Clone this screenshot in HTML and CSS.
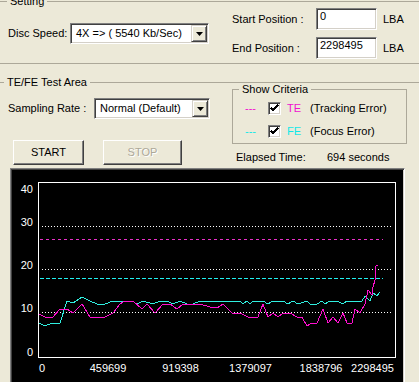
FILE: index.html
```html
<!DOCTYPE html>
<html lang="en">
<head>
    <meta charset="UTF-8">
    <title>TE/FE Test</title>
    <link rel="stylesheet" href="styles.css">
</head>
<body>
    <!-- Setting -->
    <fieldset class="group setting">
        <legend>Setting</legend>
        <div class="setting_body">
            <div class="speed_row">
                <label>Disc Speed:</label>
                <div class="combo speed_combo">
                    <span class="value">4X =&gt; ( 5540 Kb/Sec)</span>
                    <span class="drop"><svg width="7" height="4" viewBox="0 0 7 4"><polygon points="0,0 7,0 3.5,4" fill="#000"/></svg></span>
                </div>
            </div>
            <div class="pos_rows">
                <div class="pos_row">
                    <label>Start Position :</label>
                    <div class="field">0</div>
                    <span class="lba">LBA</span>
                </div>
                <div class="pos_row">
                    <label>End Position :</label>
                    <div class="field">2298495</div>
                    <span class="lba">LBA</span>
                </div>
            </div>
        </div>
    </fieldset>

    <!-- TE/FE Test Area -->
    <fieldset class="group test">
        <legend>TE/FE Test Area</legend>
        <div class="test_body">
            <div class="test_left">
                <div class="rate_row">
                    <label>Sampling Rate :</label>
                    <div class="combo rate_combo">
                        <span class="value">Normal (Default)</span>
                        <span class="drop"><svg width="7" height="4" viewBox="0 0 7 4"><polygon points="0,0 7,0 3.5,4" fill="#000"/></svg></span>
                    </div>
                </div>
                <div class="buttons">
                    <div class="btn start_btn">START</div>
                    <div class="btn stop_btn">STOP</div>
                </div>
            </div>
            <div class="test_right">
                <fieldset class="criteria">
                    <legend>Show Criteria</legend>
                    <div class="crit_body">
                        <div class="crit_row">
                            <span class="dash te">---</span>
                            <span class="check"><svg width="9" height="9" viewBox="0 0 9 9"><path d="M1 4 L3 6 L8 1" stroke="#000" stroke-width="2" fill="none" shape-rendering="crispEdges"/></svg></span>
                            <span class="crit_name te">TE</span>
                            <span>(Tracking Error)</span>
                        </div>
                        <div class="crit_row">
                            <span class="dash fe">---</span>
                            <span class="check"><svg width="9" height="9" viewBox="0 0 9 9"><path d="M1 4 L3 6 L8 1" stroke="#000" stroke-width="2" fill="none" shape-rendering="crispEdges"/></svg></span>
                            <span class="crit_name fe">FE</span>
                            <span>(Focus Error)</span>
                        </div>
                    </div>
                </fieldset>
                <div class="elapsed">
                    <span class="elapsed_label">Elapsed Time:</span>
                    <span>694 seconds</span>
                </div>
            </div>
        </div>

        <!-- 图表 -->
        <div class="chart">
            <svg width="391" height="226" viewBox="12 170 391 226" class="chart_svg">
                <g class="labels">
                    <text x="33" y="193" text-anchor="end">40</text>
                    <text x="33" y="226" text-anchor="end">30</text>
                    <text x="33" y="269" text-anchor="end">20</text>
                    <text x="33" y="312" text-anchor="end">10</text>
                    <text x="33" y="356" text-anchor="end">0</text>
                    <text x="39" y="372">0</text>
                    <text x="108" y="372" text-anchor="middle">459699</text>
                    <text x="180.5" y="372" text-anchor="middle">919398</text>
                    <text x="250.5" y="372" text-anchor="middle">1379097</text>
                    <text x="321" y="372" text-anchor="middle">1838796</text>
                    <text x="372.5" y="372" text-anchor="middle">2298495</text>
                </g>
                <rect x="38.5" y="182.5" width="357" height="175" fill="none" stroke="#fff" shape-rendering="crispEdges"/>
                <g shape-rendering="crispEdges">
                    <line x1="42" y1="226.5" x2="393" y2="226.5" stroke="#fff" stroke-dasharray="1 2"/>
                    <line x1="42" y1="269.5" x2="393" y2="269.5" stroke="#fff" stroke-dasharray="1 2"/>
                    <line x1="42" y1="312.5" x2="393" y2="312.5" stroke="#fff" stroke-dasharray="1 2"/>
                    <line x1="40" y1="239.5" x2="383" y2="239.5" stroke="#e830c8" stroke-dasharray="3 3"/>
                    <line x1="40" y1="278.5" x2="383" y2="278.5" stroke="#20f0f0" stroke-dasharray="4 2"/>
                </g>
                <polyline fill="none" stroke="#30f0e0" shape-rendering="crispEdges" points="39,323 45,326 52,323 60,323 67,301 73,303 82,297 90,301 97,304 105,304 113,301 123,301 132,301 137,304 143,301 153,304 160,301 167,301 173,304 180,301 187,304 193,304 200,301 210,301 240,301 243,304 247,301 250,304 253,301 263,301 268,304 273,301 283,301 288,304 293,301 298,304 307,301 310,304 317,304 322,301 325,304 330,301 337,301 343,304 347,301 362,301 365,296 370,301 373,293 377,296 380,292"/>
                <polyline fill="none" stroke="#ff10d0" shape-rendering="crispEdges" points="39,314 45,317 53,317 60,309 67,309 73,313 82,304 90,317 105,317 113,313 120,304 125,301 133,301 142,309 147,304 155,313 163,304 170,304 177,309 183,304 193,304 200,304 210,307 217,308 223,304 232,313 240,313 248,317 258,317 263,304 268,317 273,313 278,317 283,313 290,313 297,317 302,317 307,326 312,323 317,323 323,309 328,323 333,317 338,323 343,313 347,323 352,323 355,309 360,313 365,304 368,290 372,295 373,287 375,280 376,266 378,265"/>
            </svg>
        </div>
    </fieldset>
</body>
</html>
```

FILE: styles.css
```css
*{
    margin: 0;
    padding: 0;
    box-sizing: border-box;
}
body{
    width: 419px;
    height: 382px;
    overflow: hidden;
    background: #ECE9D8;
    color: #000;
    font: 11px/13px "Liberation Sans", Arial, sans-serif;
}
label{
    display: block;
}

/* 分组框 */
.group{
    border: 1px solid #ACA899;
    margin: 0 -3px;
    min-width: 0;
}
.group legend{
    padding: 0 3px;
    line-height: 13px;
}
.setting{
    margin-top: -5px;
}
.setting legend{
    margin-left: 9px;
}
.test{
    margin-top: 12px;
}
.test legend{
    margin-left: 6px;
}

/* Setting */
.setting_body{
    display: flex;
    align-items: center;
    padding: 0 0 4px 10px;
}
.speed_row{
    display: flex;
    align-items: center;
    width: 201px;
}
.speed_row label{
    width: 62px;
}
.speed_combo{
    width: 139px;
}
.pos_rows{
    display: flex;
    flex-direction: column;
    gap: 7px;
    margin-left: 23px;
}
.pos_row{
    display: flex;
    align-items: center;
}
.pos_row label{
    width: 84px;
}
.field{
    width: 61px;
    height: 22px;
    padding: 1px 3px 0;
    background: #fff;
    border: 1px solid;
    border-color: #808080 #fff #fff #808080;
    box-shadow: inset 1px 1px #404040, inset -1px -1px #D4D0C8;
}
.lba{
    margin-left: 6px;
}

/* 下拉框 */
.combo{
    display: flex;
    align-items: center;
    height: 21px;
    padding: 1px 1px 1px 5px;
    background: #fff;
    border: 1px solid;
    border-color: #808080 #fff #fff #808080;
    box-shadow: inset 1px 1px #404040, inset -1px -1px #D4D0C8;
}
.combo .value{
    flex: 1;
    white-space: nowrap;
}
.drop{
    width: 16px;
    height: 17px;
    display: flex;
    align-items: center;
    justify-content: center;
    background: #ECE9D8;
    border: 1px solid;
    border-color: #D4D0C8 #404040 #404040 #D4D0C8;
    box-shadow: inset 1px 1px #fff, inset -1px -1px #808080;
}
.drop svg{
    display: block;
}

/* TE/FE Test Area */
.test_body{
    display: flex;
    padding-left: 10px;
}
.test_left{
    width: 202px;
    padding-top: 9px;
}
.rate_row{
    display: flex;
    align-items: center;
}
.rate_row label{
    width: 86px;
}
.rate_combo{
    width: 116px;
}
.buttons{
    display: flex;
    margin-top: 21px;
    padding-left: 5px;
}
.btn{
    height: 25px;
    display: flex;
    align-items: center;
    justify-content: center;
    border: 1px solid;
    border-color: #fff #404040 #404040 #fff;
    box-shadow: inset -1px -1px #808080;
}
.start_btn{
    width: 71px;
}
.stop_btn{
    width: 79px;
    margin-left: 19px;
    color: #ACA899;
    text-shadow: 1px 1px #fff;
}
.test_right{
    width: 175px;
    margin-left: 22px;
}
.criteria{
    border: 1px solid #ACA899;
    margin-top: -6px;
    min-width: 0;
}
.criteria legend{
    margin-left: 6px;
    padding: 0 3px;
    line-height: 13px;
}
.crit_body{
    display: flex;
    flex-direction: column;
    gap: 10px;
    padding: 6px 0 5px 12px;
}
.crit_row{
    display: flex;
    align-items: center;
    height: 13px;
}
.dash{
    width: 23px;
}
.te{
    color: #F010D0;
}
.fe{
    color: #10E8E8;
}
.check{
    width: 13px;
    height: 13px;
    display: flex;
    align-items: center;
    justify-content: center;
    background: #fff;
    border: 1px solid;
    border-color: #808080 #fff #fff #808080;
    box-shadow: inset 1px 1px #404040, inset -1px -1px #D4D0C8;
}
.check svg{
    display: block;
}
.crit_name{
    width: 23px;
    margin-left: 6px;
}
.elapsed{
    display: flex;
    margin-top: 7px;
    padding-left: 4px;
}
.elapsed_label{
    width: 91px;
}

/* 图表区域 */
.chart{
    width: 395px;
    height: 230px;
    margin: 3px 0 0 12px;
    padding: 1px;
    background: #000;
    border: 1px solid;
    border-color: #808080 #fff #fff #808080;
    box-shadow: inset 1px 1px #404040, inset -1px -1px #D4D0C8;
}
.chart_svg{
    display: block;
}
.chart_svg text{
    fill: #fff;
    font-family: "Liberation Sans", Arial, sans-serif;
    font-size: 11px;
}
```
